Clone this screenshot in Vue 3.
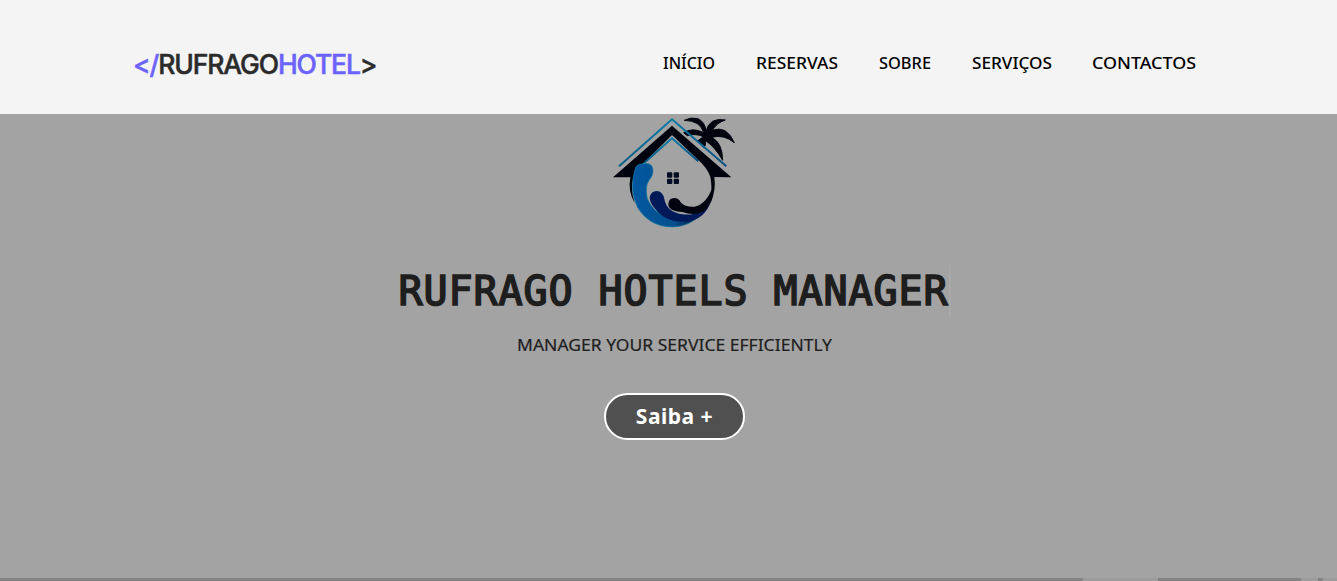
<script setup>
const links = [
  { label: 'INÍCIO', width: 52 },
  { label: 'RESERVAS', width: 82 },
  { label: 'SOBRE', width: 52 },
  { label: 'SERVIÇOS', width: 80 },
  { label: 'CONTACTOS', width: 104 },
]
</script>

<template>
  <div class="page">
    <header class="header">
      <div class="brand"><span class="accent">&lt;/</span>RUFRAGO<span class="accent">HOTEL</span>&gt;</div>
      <nav class="nav">
        <svg v-for="link in links" :key="link.label" class="link" :width="link.width" height="26">
          <text x="0" y="18" :textLength="link.width" lengthAdjust="spacingAndGlyphs">{{ link.label }}</text>
        </svg>
      </nav>
    </header>
    <main class="hero">
      <svg class="emblem" width="150" height="125" viewBox="0 0 450 375">
        <defs>
          <linearGradient id="roof" x1="0" x2="1">
            <stop offset="0" stop-color="#075b80" />
            <stop offset=".5" stop-color="#087ba6" />
            <stop offset="1" stop-color="#064d80" />
          </linearGradient>
          <linearGradient id="wave" x1="0" x2="1">
            <stop offset="0" stop-color="#0058a0" />
            <stop offset=".6" stop-color="#064f8c" />
            <stop offset="1" stop-color="#020b32" />
          </linearGradient>
        </defs>
        <g fill="#01030f">
          <path d="M326 74Q316 38 268 37Q288 26 309 32Q330 42 333 69Q344 27 391 36Q365 44 352 67Q395 51 418 104Q386 78 350 88Q382 104 383 157Q361 118 332 98Q333 113 326 119L307 99L326 86Q299 75 277 83L266 74Q293 57 326 74Z" stroke="#01030f" stroke-width="3" />
          <path d="M54 208L231 53L409 208L358 207Q364 246 346 288Q353 243 346 206Q337 179 306 152L231 81L155 157Q112 191 111 236Q111 260 119 285Q98 249 106 208Z" />
        </g>
        <g fill="none" stroke="url(#roof)" stroke-linejoin="miter">
          <path d="M72 175L231 34L394 175" stroke-width="6" />
          <path d="M148 164L231 91L310 160" stroke-width="6" />
        </g>
        <path d="M122 178Q129 165 159 167Q174 169 174 190Q174 203 162 217Q149 236 157 272Q174 313 222 332Q274 348 322 315Q286 356 232 357Q165 357 129 301Q100 246 122 178Z" fill="url(#wave)" stroke="#087aa0" stroke-width="2" />
        <path d="M164 269Q167 249 185 249Q203 249 208 273Q215 313 263 319Q317 326 349 276Q331 335 275 341Q212 345 181 303Q166 287 164 269Z" fill="#001a59" />
        <path d="M220 288Q221 270 238 270Q251 270 258 284Q271 298 299 296Q337 288 354 232Q357 279 332 305Q303 327 262 312Q220 310 220 288Z" fill="#01030f" />
        <g fill="#010d22">
          <rect x="216" y="193" width="16" height="16" rx="3" />
          <rect x="236" y="193" width="16" height="16" rx="3" />
          <rect x="216" y="212" width="16" height="16" rx="3" />
          <rect x="236" y="212" width="16" height="16" rx="3" />
        </g>
        <path d="M29 38l6 8" stroke="#999" stroke-width="2" />
      </svg>
      <h1 class="title">RUFRAGO HOTELS MANAGER</h1>
      <svg class="subtitle" width="315" height="28">
        <text x="0" y="20" textLength="315" lengthAdjust="spacingAndGlyphs">MANAGER YOUR SERVICE EFFICIENTLY</text>
      </svg>
      <button class="more">Saiba +</button>
    </main>
    <div class="strip"><i class="gap wide"></i><i class="gap small"></i><i class="gap end"></i></div>
  </div>
</template>

<style>
body { margin: 0; overflow: hidden; }
</style>

<style scoped>
.page { width: 1337px; height: 581px; display: flex; flex-direction: column; background: #a3a3a3; overflow: hidden; }
.header { height: 114px; flex: none; box-sizing: border-box; padding: 13px 141px 0 133px; display: flex; align-items: center; justify-content: space-between; background: #f4f4f4; }
.brand { font: 500 26.5px/36px Inter, sans-serif; letter-spacing: -1.12px; color: #2b2b2b; white-space: nowrap; padding-top: 1px; -webkit-text-stroke: 0.5px; }
.accent { color: #6c63ff; }
.nav { display: flex; gap: 41px; }
.link { display: block; overflow: visible; }
.link:nth-child(4) { margin-right: -1px; }
.link text { font: 500 16.5px "Noto Sans", sans-serif; fill: #000; }
.hero { flex: 1; display: flex; flex-direction: column; align-items: center; padding-left: 12px; }
.emblem { flex: none; margin: -6px 10px 0 0; align-self: center; }
.title { margin: 31px 0 0; height: 52px; box-sizing: border-box; border-right: 2px solid #a9a9a9; font: 400 40px/54px "DejaVu Sans Mono", monospace; letter-spacing: 0.92px; -webkit-text-stroke: 1.7px #1e1e1e; color: #1e1e1e; white-space: pre; }
.subtitle { display: block; margin-top: 15px; overflow: visible; }
.subtitle text { font: 400 16.5px "Noto Sans", sans-serif; fill: #1e1e1e; stroke: #1e1e1e; stroke-width: 0.2px; }
.more { margin-top: 34px; width: 141px; height: 47px; box-sizing: border-box; border: 2px solid #fff; border-radius: 24px; background: #505050; color: #fff; font: 700 21px/40px "Noto Sans", sans-serif; letter-spacing: 0.5px; padding: 0 0 2px; }
.strip { height: 3px; flex: none; position: relative; background: #828282; }
.gap { position: absolute; top: 0; height: 3px; background: #9c9c9c; }
.wide { left: 1083px; width: 75px; }
.small { left: 1301px; width: 17px; }
.end { left: 1323px; width: 14px; }
</style>
